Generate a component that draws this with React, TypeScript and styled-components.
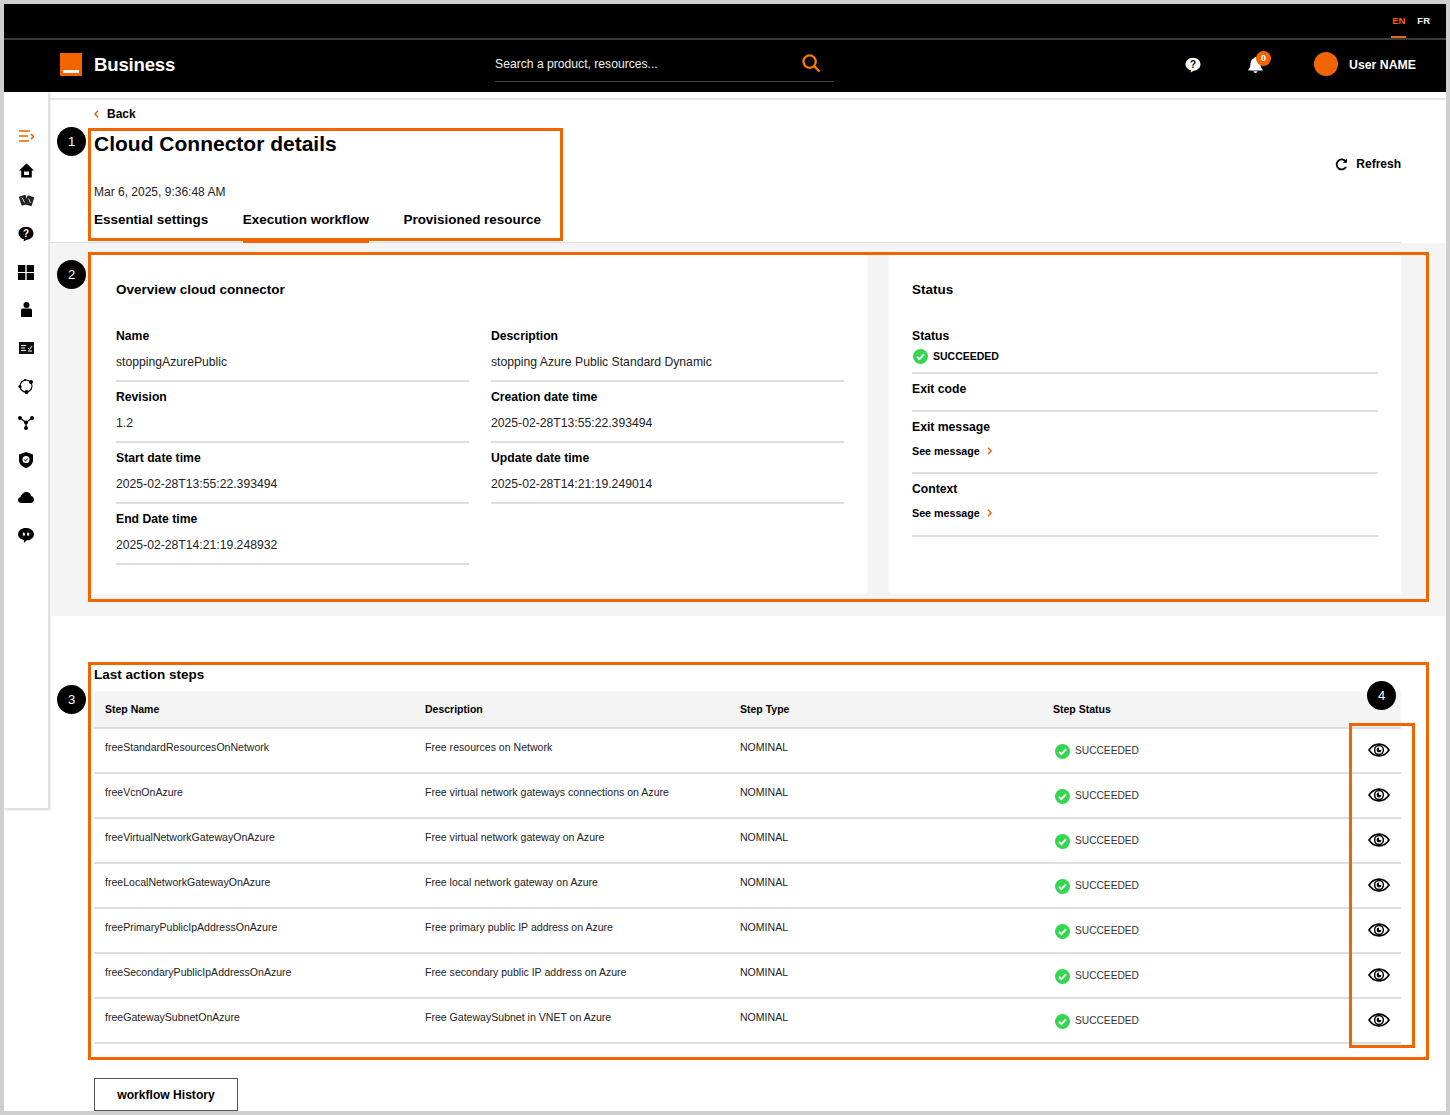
import React from "react";
import styled, { createGlobalStyle } from "styled-components";

const ORANGE = "#f26400";
const LINE = "#dedede";

const GlobalStyle = createGlobalStyle`
  html, body {
    margin: 0;
    padding: 0;
    background: #fff;
    overflow: hidden;
  }
  body {
    font-family: "Liberation Sans", Arial, sans-serif;
    color: #000;
  }
`;

const Page = styled.div`
  position: relative;
  box-sizing: border-box;
  width: 1450px;
  height: 1115px;
  padding: 4px;
  background: #cfcfcf;
  overflow: hidden;
`;

const Frame = styled.div`
  height: 100%;
  background: #fff;
  overflow: hidden;
`;

/* header */
const TopBar = styled.div`
  display: flex;
  justify-content: flex-end;
  height: 34px;
  padding-right: 15px;
  gap: 10px;
  background: #000;
  border-bottom: 2px solid #3a3a3a;
`;

const Lang = styled.span<{ $active?: boolean }>`
  display: flex;
  align-items: center;
  box-sizing: border-box;
  height: 34px;
  padding: 0 1px 2px;
  font-size: 9.5px;
  font-weight: 700;
  color: ${(p) => (p.$active ? ORANGE : "#e8f4ff")};
  box-shadow: ${(p) => (p.$active ? `inset 0 -2px 0 ${ORANGE}` : "none")};
`;

const MainBar = styled.header`
  display: flex;
  align-items: center;
  box-sizing: border-box;
  height: 52px;
  background: #000;
  color: #fff;
  padding: 0 0 4px 56px;
`;

const Logo = styled.div`
  position: relative;
  flex: none;
  width: 22px;
  height: 23px;
  background: ${ORANGE};
  &::after {
    content: "";
    position: absolute;
    left: 3px;
    right: 3px;
    bottom: 3px;
    height: 3px;
    background: #fff;
  }
`;

const Brand = styled.span`
  margin: 1px 0 0 12px;
  font-size: 18.6px;
  font-weight: 700;
  letter-spacing: -0.2px;
`;

const Search = styled.div`
  display: flex;
  align-items: center;
  justify-content: space-between;
  box-sizing: border-box;
  width: 339px;
  height: 35px;
  margin: 0 0 0 320px;
  padding-right: 13px;
  border-bottom: 1px solid #444;
  font-size: 12.15px;
  color: #f0f0f0;
`;

const HeaderIcons = styled.div`
  display: flex;
  align-items: center;
  margin-left: auto;
  padding-right: 30px;
  > svg {
    margin-top: 2px;
  }
`;

const BellWrap = styled.div`
  position: relative;
  display: flex;
  margin: 1px 0 0 47px;
`;

const BellBadge = styled.span`
  position: absolute;
  top: -6px;
  left: 8px;
  display: flex;
  align-items: center;
  justify-content: center;
  width: 15px;
  height: 15px;
  border-radius: 50%;
  background: ${ORANGE};
  font-size: 9px;
  font-weight: 700;
  color: #fff;
`;

const Avatar = styled.span`
  width: 24px;
  height: 24px;
  margin-left: 51px;
  border-radius: 50%;
  background: ${ORANGE};
`;

const UserName = styled.span`
  margin: 1px 0 0 11px;
  font-size: 12.3px;
  font-weight: 700;
`;

/* body */
const Body = styled.div`
  display: flex;
  align-items: flex-start;
`;

const Sidebar = styled.nav`
  flex: none;
  box-sizing: border-box;
  width: 45px;
  height: 717px;
  padding-top: 26px;
  display: flex;
  flex-direction: column;
  align-items: center;
  background: #fff;
  border-right: 1px solid #e2e2e2;
  border-bottom: 1px solid #e2e2e2;
  box-shadow: 1px 1px 2px rgba(0, 0, 0, 0.18);
`;

const NavItem = styled.div<{ $h: number }>`
  display: flex;
  align-items: center;
  justify-content: center;
  height: ${(p) => p.$h}px;
`;

const Main = styled.main`
  flex: 1;
  min-width: 0;
  margin: 6px 0 0 1px;
  border-top: 2px solid #e6e6e6;
`;

const Head = styled.section`
  position: relative;
  height: 142px;
  margin-right: 45px;
  padding-left: 44px;
  border-bottom: 1px solid ${LINE};
`;

const Back = styled.div`
  display: flex;
  align-items: center;
  height: 16px;
  padding-top: 6px;
  gap: 8px;
  font-size: 12px;
  font-weight: 700;
`;

const Title = styled.h1`
  margin: 9px 0 0;
  font-size: 21px;
  line-height: 26px;
  font-weight: 700;
`;

const DateLine = styled.div`
  margin-top: 27px;
  font-size: 12px;
  line-height: 16px;
  color: #222;
`;

const Tabs = styled.div`
  display: flex;
  gap: 34.5px;
  margin-top: 8px;
`;

const Tab = styled.div<{ $active?: boolean }>`
  height: 35px;
  box-sizing: border-box;
  padding-top: 4px;
  font-size: 13.45px;
  line-height: 16px;
  font-weight: 700;
  border-bottom: 3px solid ${(p) => (p.$active ? ORANGE : "transparent")};
`;

const Refresh = styled.div`
  position: absolute;
  top: 57px;
  right: 0;
  display: flex;
  align-items: center;
  gap: 8px;
  font-size: 12px;
  font-weight: 700;
`;

const Band = styled.section`
  display: flex;
  gap: 22px;
  height: 373px;
  box-sizing: border-box;
  padding: 12px 45px 22px 42px;
  background: #f4f4f4;
`;

const Card = styled.div<{ $w: number; $px: number }>`
  box-sizing: border-box;
  width: ${(p) => p.$w}px;
  padding: 27px ${(p) => p.$px}px 0;
  background: #fff;
`;

const CardTitle = styled.h2`
  margin: 0 0 23px;
  font-size: 13.5px;
  line-height: 16px;
  font-weight: 700;
`;

const FieldGrid = styled.div`
  display: grid;
  grid-template-columns: 353px 353px;
  column-gap: 22px;
`;

const Field = styled.div`
  box-sizing: border-box;
  height: 61px;
  padding-top: 8px;
  border-bottom: 2px solid ${LINE};
`;

const Label = styled.div`
  font-size: 12.2px;
  line-height: 15px;
  font-weight: 700;
`;

const Value = styled.div`
  margin-top: 11px;
  font-size: 12.2px;
  line-height: 15px;
  color: #222;
`;

const StatusField = styled.div<{ $h: number; $pt: number }>`
  box-sizing: border-box;
  height: ${(p) => p.$h}px;
  padding-top: ${(p) => p.$pt}px;
  border-bottom: 2px solid ${LINE};
`;

const BoldStatus = styled.div`
  display: flex;
  align-items: center;
  gap: 5px;
  margin-top: 5px;
  padding-left: 1px;
  font-size: 10.5px;
  line-height: 15px;
  font-weight: 700;
`;

const SeeLink = styled.div`
  display: flex;
  align-items: center;
  gap: 7px;
  margin-top: 9px;
  font-size: 10.7px;
  line-height: 14px;
  font-weight: 700;
`;

const Steps = styled.section`
  margin: 0 45px 0 44px;
  padding-top: 51px;
`;

const StepsTitle = styled.h2`
  margin: 0 0 8px;
  font-size: 13.5px;
  line-height: 16px;
  font-weight: 700;
`;

const gridCols = "320px 315px 313px 315px 1fr";

const TableHead = styled.div`
  display: grid;
  grid-template-columns: ${gridCols};
  align-items: center;
  box-sizing: border-box;
  height: 38px;
  padding-left: 11px;
  background: #f4f4f4;
  border-bottom: 2px solid ${LINE};
  font-size: 10.5px;
  font-weight: 700;
`;

const Row = styled.div`
  display: grid;
  grid-template-columns: ${gridCols};
  box-sizing: border-box;
  height: 45px;
  padding: 12px 0 0 11px;
  border-bottom: 2px solid ${LINE};
  font-size: 10.55px;
  line-height: 12px;
  color: #222;
`;

const StatusCell = styled.div`
  display: flex;
  align-items: center;
  gap: 5px;
  height: 20px;
  padding-left: 2px;
  font-size: 10.2px;
  color: #333;
`;

const EyeCell = styled.div`
  display: flex;
  height: 16px;
  margin-top: 2px;
`;

const HistoryButton = styled.button`
  display: block;
  box-sizing: border-box;
  width: 144px;
  height: 33px;
  margin-top: 34px;
  border: 1px solid #555;
  background: #fff;
  font-family: inherit;
  font-size: 12.1px;
  font-weight: 700;
  color: #000;
`;

/* annotations drawn over the screenshot */
const Callout = styled.div<{ $l: number; $t: number; $w: number; $h: number }>`
  position: absolute;
  left: ${(p) => p.$l}px;
  top: ${(p) => p.$t}px;
  width: ${(p) => p.$w}px;
  height: ${(p) => p.$h}px;
  box-sizing: border-box;
  border: 3px solid ${ORANGE};
  pointer-events: none;
`;

const Marker = styled.div<{ $l: number; $t: number }>`
  position: absolute;
  left: ${(p) => p.$l}px;
  top: ${(p) => p.$t}px;
  display: flex;
  align-items: center;
  justify-content: center;
  width: 29px;
  height: 29px;
  border-radius: 50%;
  background: #000;
  color: #fff;
  font-size: 13px;
`;

const Check = () => (
  <svg width="15" height="15" viewBox="0 0 16 16">
    <circle cx="8" cy="8" r="8" fill="#32d74f" />
    <path d="M4.2 8.3l2.6 2.6 5-5.3" fill="none" stroke="#fff" strokeWidth="2" />
  </svg>
);

const Chevron = ({ dir = "right" }: { dir?: "left" | "right" }) => (
  <svg width="5" height="8" viewBox="0 0 5 8">
    <path
      d={dir === "right" ? "M1 .8L4 4 1 7.2" : "M4 .8L1 4l3 3.2"}
      fill="none"
      stroke={ORANGE}
      strokeWidth="1.5"
    />
  </svg>
);

const Eye = () => (
  <svg width="22" height="14" viewBox="0 0 22 14">
    <path
      d="M1 7c2.6-3.9 6-5.9 10-5.9S18.4 3.1 21 7c-2.6 3.900-6 5.900-10 5.900S3.600 10.900 1 7z"
      fill="none"
      stroke="#000"
      strokeWidth="1.6"
    />
    <circle cx="11" cy="7" r="4.4" fill="none" stroke="#000" strokeWidth="1.5" />
    <path d="M11 4.600a2.400 2.400 0 1 0 2.400 2.400H11z" fill="#000" />
  </svg>
);

const QuestionBubble = ({ color, mark }: { color: string; mark: string }) => (
  <svg width="16" height="16" viewBox="0 0 16 16">
    <path d="M8 .8c4.200 0 7.500 2.800 7.500 6.500S12.200 13.700 8.800 13.700L5.600 15.600l.4-2.300C2.800 12.500.5 10.200.5 7.300.5 3.600 3.800.8 8 .8z" fill={color} />
    <text x="8" y="11" textAnchor="middle" fontSize="10" fontWeight="700" fontFamily="Liberation Sans" fill={mark}>?</text>
  </svg>
);

const navIcons: { h: number; icon: React.ReactNode }[] = [
  {
    h: 35,
    icon: (
      <svg width="15" height="14" viewBox="0 0 15 14" fill="none" stroke={ORANGE} strokeWidth="1.700">
        <path d="M0 2h11M0 7h9M0 12h10M12 5l2.500 2.500L12 10" />
      </svg>
    ),
  },
  {
    h: 34,
    icon: (
      <svg width="15" height="15" viewBox="0 0 15 15">
        <path d="M7.500.5L15 7.500h-2.200V14.500H2.200V7.500H0zM5 8.500v3.500h5V8.500z" fill="#000" fillRule="evenodd" />
      </svg>
    ),
  },
  {
    h: 26,
    icon: (
      <svg width="15" height="13" viewBox="0 0 15 13">
        <g fill="#222">
          <rect x="1" y="1.500" width="7" height="9.500" rx="1" transform="rotate(-18 4.500 6)" />
          <rect x="7" y="2" width="7" height="9.500" rx="1" transform="rotate(18 10.500 7)" />
        </g>
        <path d="M3 3.500l2.500 5M9.500 4.500l2 4.500" stroke="#ccc" strokeWidth="1" />
      </svg>
    ),
  },
  { h: 42, icon: <QuestionBubble color="#000" mark="#fff" /> },
  {
    h: 34,
    icon: (
      <svg width="16" height="15" viewBox="0 0 16 15" fill="#000">
        <rect width="7.300" height="7" />
        <rect x="8.700" width="7.300" height="7" />
        <rect y="8" width="7.300" height="7" />
        <rect x="8.700" y="8" width="7.300" height="7" />
      </svg>
    ),
  },
  {
    h: 41,
    icon: (
      <svg width="11" height="15" viewBox="0 0 11 15" fill="#000">
        <circle cx="5.500" cy="3" r="3" />
        <path d="M1.500 6.500h8c1 0 1.500 1 1.500 2V15H0V8.500c0-1 .5-2 1.500-2z" />
      </svg>
    ),
  },
  {
    h: 35,
    icon: (
      <svg width="15" height="12" viewBox="0 0 15 12">
        <rect width="15" height="12" fill="#111" />
        <path d="M2 3.500h5M2 6h4M2 8.500h5M9 6l1.500 1.500L13 4M9 9h4" stroke="#fff" strokeWidth="1" fill="none" />
      </svg>
    ),
  },
  {
    h: 41,
    icon: (
      <svg width="16" height="16" viewBox="0 0 16 16">
        <circle cx="8" cy="8" r="6" fill="none" stroke="#000" strokeWidth="1.100" />
        <circle cx="13" cy="4" r="2" fill="#000" />
        <circle cx="2" cy="8.500" r="1.600" fill="#000" />
        <circle cx="8.500" cy="14" r="2" fill="#000" />
        <circle cx="7" cy="2" r="1.100" fill="#000" />
      </svg>
    ),
  },
  {
    h: 33,
    icon: (
      <svg width="16" height="14" viewBox="0 0 16 14">
        <path d="M2 2l6 4.500L14 2M8 6.500V12" stroke="#000" strokeWidth="1.300" fill="none" />
        <circle cx="2" cy="2" r="2" fill="#000" />
        <circle cx="14" cy="2" r="2" fill="#000" />
        <circle cx="8" cy="6.500" r="2" fill="#000" />
        <circle cx="8" cy="12" r="2" fill="#000" />
      </svg>
    ),
  },
  {
    h: 42,
    icon: (
      <svg width="14" height="16" viewBox="0 0 14 16">
        <path d="M7 0l7 2.500V8c0 4-3 6.800-7 8-4-1.200-7-4-7-8V2.500z" fill="#000" />
        <circle cx="7" cy="7.500" r="3.500" fill="#fff" />
        <path d="M5 7.500l1.500 1.500L9 6.300" stroke="#555" strokeWidth="1.200" fill="none" />
      </svg>
    ),
  },
  {
    h: 33,
    icon: (
      <svg width="16" height="11" viewBox="0 0 16 11">
        <path d="M3.500 11C1.500 11 0 9.700 0 8c0-1.500 1-2.700 2.500-3C3.200 2 5.700 0 8.500 0c2.500 0 4.300 1.700 4.800 4C15 4.500 16 6 16 7.700 16 9.600 14.500 11 12.500 11z" fill="#000" />
      </svg>
    ),
  },
  {
    h: 42,
    icon: (
      <svg width="16" height="15" viewBox="0 0 16 15">
        <path d="M8 0c4.400 0 8 2.700 8 6.200 0 3.500-3.300 6.100-7.200 6.100L5.800 15l.3-3C2.600 11.300 0 9.100 0 6.200 0 2.700 3.600 0 8 0z" fill="#000" />
        <path d="M4.800 7.500V5.800c0-.9.500-1.300 1.300-1.500v1h.9v2.200zM9 7.500V5.800c0-.9.500-1.300 1.300-1.500v1h.9v2.200z" fill="#fff" />
      </svg>
    ),
  },
];

const leftFields = [
  ["Name", "stoppingAzurePublic"],
  ["Description", "stopping Azure Public Standard Dynamic"],
  ["Revision", "1.2"],
  ["Creation date time", "2025-02-28T13:55:22.393494"],
  ["Start date time", "2025-02-28T13:55:22.393494"],
  ["Update date time", "2025-02-28T14:21:19.249014"],
  ["End Date time", "2025-02-28T14:21:19.248932"],
];

const steps = [
  ["freeStandardResourcesOnNetwork", "Free resources on Network"],
  ["freeVcnOnAzure", "Free virtual network gateways connections on Azure"],
  ["freeVirtualNetworkGatewayOnAzure", "Free virtual network gateway on Azure"],
  ["freeLocalNetworkGatewayOnAzure", "Free local network gateway on Azure"],
  ["freePrimaryPublicIpAddressOnAzure", "Free primary public IP address on Azure"],
  ["freeSecondaryPublicIpAddressOnAzure", "Free secondary public IP address on Azure"],
  ["freeGatewaySubnetOnAzure", "Free GatewaySubnet in VNET on Azure"],
];

const App: React.FC = () => {
  return (
    <Page>
      <GlobalStyle />
      <Frame>
        <TopBar>
          <Lang $active>EN</Lang>
          <Lang>FR</Lang>
        </TopBar>
        <MainBar>
          <Logo />
          <Brand>Business</Brand>
          <Search>
            <span>Search a product, resources...</span>
            <svg width="19" height="19" viewBox="0 0 20 20" fill="none" stroke="#ff7900" strokeWidth="2.400">
              <circle cx="8" cy="8" r="6.500" />
              <path d="M12.800 12.800L18.500 18.500" />
            </svg>
          </Search>
          <HeaderIcons>
            <QuestionBubble color="#fff" mark="#000" />
            <BellWrap>
              <svg width="15" height="16" viewBox="0 0 15 16" fill="#fff">
                <path d="M7.500 0c.8 0 1.200.5 1.200 1.200C11 1.800 12.500 3.700 12.500 6.500c0 3 .7 4.700 2.200 6.300v.7H.3v-.7C1.800 11.200 2.500 9.500 2.500 6.500c0-2.800 1.500-4.700 3.800-5.300C6.300.500 6.700 0 7.500 0zM5.500 14.300h4C9.300 15.400 8.500 16 7.500 16s-1.800-.6-2-1.700z" />
              </svg>
              <BellBadge>0</BellBadge>
            </BellWrap>
            <Avatar />
            <UserName>User NAME</UserName>
          </HeaderIcons>
        </MainBar>
        <Body>
          <Sidebar>
            {navIcons.map((item, i) => (
              <NavItem key={i} $h={item.h}>
                {item.icon}
              </NavItem>
            ))}
          </Sidebar>
          <Main>
            <Head>
              <Back>
                <Chevron dir="left" />
                <span>Back</span>
              </Back>
              <Title>Cloud Connector details</Title>
              <DateLine>Mar 6, 2025, 9:36:48 AM</DateLine>
              <Tabs>
                <Tab>Essential settings</Tab>
                <Tab $active>Execution workflow</Tab>
                <Tab>Provisioned resource</Tab>
              </Tabs>
              <Refresh>
                <svg width="13" height="13" viewBox="0 0 13 13" fill="none">
                  <path d="M10.500 3.200A5 5 0 1 0 11 9" stroke="#000" strokeWidth="1.800" />
                  <path d="M12 .5v4.200H7.800z" fill="#000" />
                </svg>
                <span>Refresh</span>
              </Refresh>
            </Head>
            <Band>
              <Card $w={775} $px={24}>
                <CardTitle>Overview cloud connector</CardTitle>
                <FieldGrid>
                  {leftFields.map(([label, value]) => (
                    <Field key={label}>
                      <Label>{label}</Label>
                      <Value>{value}</Value>
                    </Field>
                  ))}
                </FieldGrid>
              </Card>
              <Card $w={512} $px={23}>
                <CardTitle>Status</CardTitle>
                <StatusField $h={53} $pt={8}>
                  <Label>Status</Label>
                  <BoldStatus>
                    <Check />
                    SUCCEEDED
                  </BoldStatus>
                </StatusField>
                <StatusField $h={38} $pt={8}>
                  <Label>Exit code</Label>
                </StatusField>
                <StatusField $h={62} $pt={8}>
                  <Label>Exit message</Label>
                  <SeeLink>
                    See message <Chevron />
                  </SeeLink>
                </StatusField>
                <StatusField $h={63} $pt={8}>
                  <Label>Context</Label>
                  <SeeLink>
                    See message <Chevron />
                  </SeeLink>
                </StatusField>
              </Card>
            </Band>
            <Steps>
              <StepsTitle>Last action steps</StepsTitle>
              <TableHead>
                <span>Step Name</span>
                <span>Description</span>
                <span>Step Type</span>
                <span>Step Status</span>
              </TableHead>
              {steps.map(([name, desc]) => (
                <Row key={name}>
                  <span>{name}</span>
                  <span>{desc}</span>
                  <span>NOMINAL</span>
                  <StatusCell>
                    <Check />
                    SUCCEEDED
                  </StatusCell>
                  <EyeCell>
                    <Eye />
                  </EyeCell>
                </Row>
              ))}
              <HistoryButton>workflow History</HistoryButton>
            </Steps>
          </Main>
        </Body>
      </Frame>

      <Callout $l={88} $t={128} $w={475} $h={113} />
      <Callout $l={88} $t={252} $w={1341} $h={350} />
      <Callout $l={88} $t={662} $w={1341} $h={398} />
      <Callout $l={1349} $t={723} $w={66} $h={325} />
      <Marker $l={57} $t={127}>1</Marker>
      <Marker $l={57} $t={260}>2</Marker>
      <Marker $l={57} $t={685}>3</Marker>
      <Marker $l={1367} $t={681}>4</Marker>
    </Page>
  );
};

export default App;
